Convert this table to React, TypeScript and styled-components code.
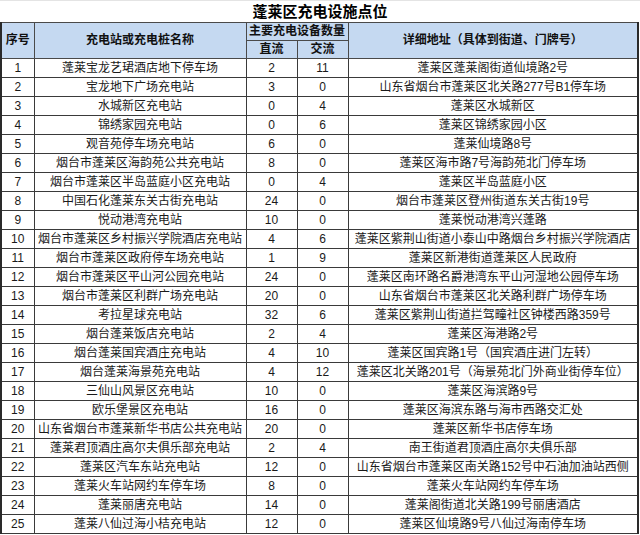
import * as React from 'react';
import styled, { createGlobalStyle } from 'styled-components';

interface Station {
  name: string;
  dc: number;
  ac: number;
  address: string;
}

const stations: Station[] = [
  { name: '蓬莱宝龙艺珺酒店地下停车场', dc: 2, ac: 11, address: '蓬莱区蓬莱阁街道仙境路2号' },
  { name: '宝龙地下广场充电站', dc: 3, ac: 0, address: '山东省烟台市蓬莱区北关路277号B1停车场' },
  { name: '水城新区充电站', dc: 0, ac: 4, address: '蓬莱区水城新区' },
  { name: '锦绣家园充电站', dc: 0, ac: 6, address: '蓬莱区锦绣家园小区' },
  { name: '观音苑停车场充电站', dc: 6, ac: 0, address: '蓬莱仙境路8号' },
  { name: '烟台市蓬莱区海韵苑公共充电站', dc: 8, ac: 0, address: '蓬莱区海市路7号海韵苑北门停车场' },
  { name: '烟台市蓬莱区半岛蓝庭小区充电站', dc: 0, ac: 4, address: '蓬莱区半岛蓝庭小区' },
  { name: '中国石化蓬莱东关古街充电站', dc: 24, ac: 0, address: '烟台市蓬莱区登州街道东关古街19号' },
  { name: '悦动港湾充电站', dc: 10, ac: 0, address: '蓬莱悦动港湾兴蓬路' },
  { name: '烟台市蓬莱区乡村振兴学院酒店充电站', dc: 4, ac: 6, address: '蓬莱区紫荆山街道小泰山中路烟台乡村振兴学院酒店' },
  { name: '烟台市蓬莱区政府停车场充电站', dc: 1, ac: 9, address: '蓬莱区新港街道蓬莱区人民政府' },
  { name: '烟台市蓬莱区平山河公园充电站', dc: 24, ac: 0, address: '蓬莱区南环路名爵港湾东平山河湿地公园停车场' },
  { name: '烟台市蓬莱区利群广场充电站', dc: 20, ac: 0, address: '山东省烟台市蓬莱区北关路利群广场停车场' },
  { name: '考拉星球充电站', dc: 32, ac: 6, address: '蓬莱区紫荆山街道拦驾疃社区钟楼西路359号' },
  { name: '烟台蓬莱饭店充电站', dc: 2, ac: 4, address: '蓬莱区海港路2号' },
  { name: '烟台蓬莱国宾酒庄充电站', dc: 4, ac: 10, address: '蓬莱区国宾路1号（国宾酒庄进门左转）' },
  { name: '烟台蓬莱海景苑充电站', dc: 4, ac: 12, address: '蓬莱区北关路201号（海景苑北门外商业街停车位）' },
  { name: '三仙山风景区充电站', dc: 10, ac: 0, address: '蓬莱区海滨路9号' },
  { name: '欧乐堡景区充电站', dc: 16, ac: 0, address: '蓬莱区海滨东路与海市西路交汇处' },
  { name: '山东省烟台市蓬莱新华书店公共充电站', dc: 20, ac: 0, address: '蓬莱区新华书店停车场' },
  { name: '蓬莱君顶酒庄高尔夫俱乐部充电站', dc: 2, ac: 4, address: '南王街道君顶酒庄高尔夫俱乐部' },
  { name: '蓬莱区汽车东站充电站', dc: 12, ac: 0, address: '山东省烟台市蓬莱区南关路152号中石油加油站西侧' },
  { name: '蓬莱火车站网约车停车场', dc: 8, ac: 0, address: '蓬莱火车站网约车停车场' },
  { name: '蓬莱丽唐充电站', dc: 14, ac: 0, address: '蓬莱阁街道北关路199号丽唐酒店' },
  { name: '蓬莱八仙过海小桔充电站', dc: 12, ac: 0, address: '蓬莱区仙境路9号八仙过海南停车场' },
];

/** 충전소 목록 표 */
const App = () => {
  return (
    <>
      <GlobalStyle />
      <Sheet>
        <Title>蓬莱区充电设施点位</Title>
        <Table>
          <colgroup>
            <col style={{ width: 33 }} />
            <col style={{ width: 212 }} />
            <col style={{ width: 51 }} />
            <col style={{ width: 51 }} />
            <col />
          </colgroup>
          <thead>
            <tr>
              <HeadCell rowSpan={2}>序号</HeadCell>
              <HeadCell rowSpan={2}>充电站或充电桩名称</HeadCell>
              <HeadCell colSpan={2}>主要充电设备数量</HeadCell>
              <HeadCell rowSpan={2}>详细地址（具体到街道、门牌号）</HeadCell>
            </tr>
            <tr>
              <HeadCell>直流</HeadCell>
              <HeadCell>交流</HeadCell>
            </tr>
          </thead>
          <tbody>
            {stations.map((s, index) => (
              <Row key={index}>
                <Cell>{index + 1}</Cell>
                <Cell>{s.name}</Cell>
                <Cell>{s.dc}</Cell>
                <Cell>{s.ac}</Cell>
                <Cell>{s.address}</Cell>
              </Row>
            ))}
          </tbody>
        </Table>
      </Sheet>
    </>
  );
};

const GlobalStyle = createGlobalStyle`
  html, body {
    margin: 0;
    padding: 0;
    background: #fff;
  }
  body {
    font-family: "Liberation Sans", "Noto Sans CJK SC", sans-serif;
    color: #111;
  }
`;

const Sheet = styled.div`
  width: 640px;
  height: 535px;
  overflow: hidden;
  background: #fff;
`;

const Title = styled.div`
  height: 22px;
  line-height: 21px;
  text-align: center;
  font-size: 15px;
  font-weight: 700;
  color: #000;
  border-top: 1px solid #e4e4e4;
  box-sizing: border-box;
`;

const Table = styled.table`
  width: 639px;
  table-layout: fixed;
  border-collapse: collapse;
  border-left: 2px solid #2a2a2a;
  border-right: 2px solid #2a2a2a;
`;

const HeadCell = styled.th`
  height: 17px;
  padding: 0;
  background: #c5d9f1;
  border: 1px solid #4a4a4a;
  font-size: 12px;
  font-weight: 700;
  line-height: 17px;
  text-align: center;
  white-space: nowrap;
  color: #111;
`;

const Row = styled.tr`
  height: 19px;
`;

const Cell = styled.td`
  height: 18px;
  padding: 0;
  border: 1px solid #3a3a3a;
  font-size: 12px;
  line-height: 18px;
  text-align: center;
  white-space: nowrap;
  overflow: hidden;
  color: #1a1a1a;
`;

export default App;
